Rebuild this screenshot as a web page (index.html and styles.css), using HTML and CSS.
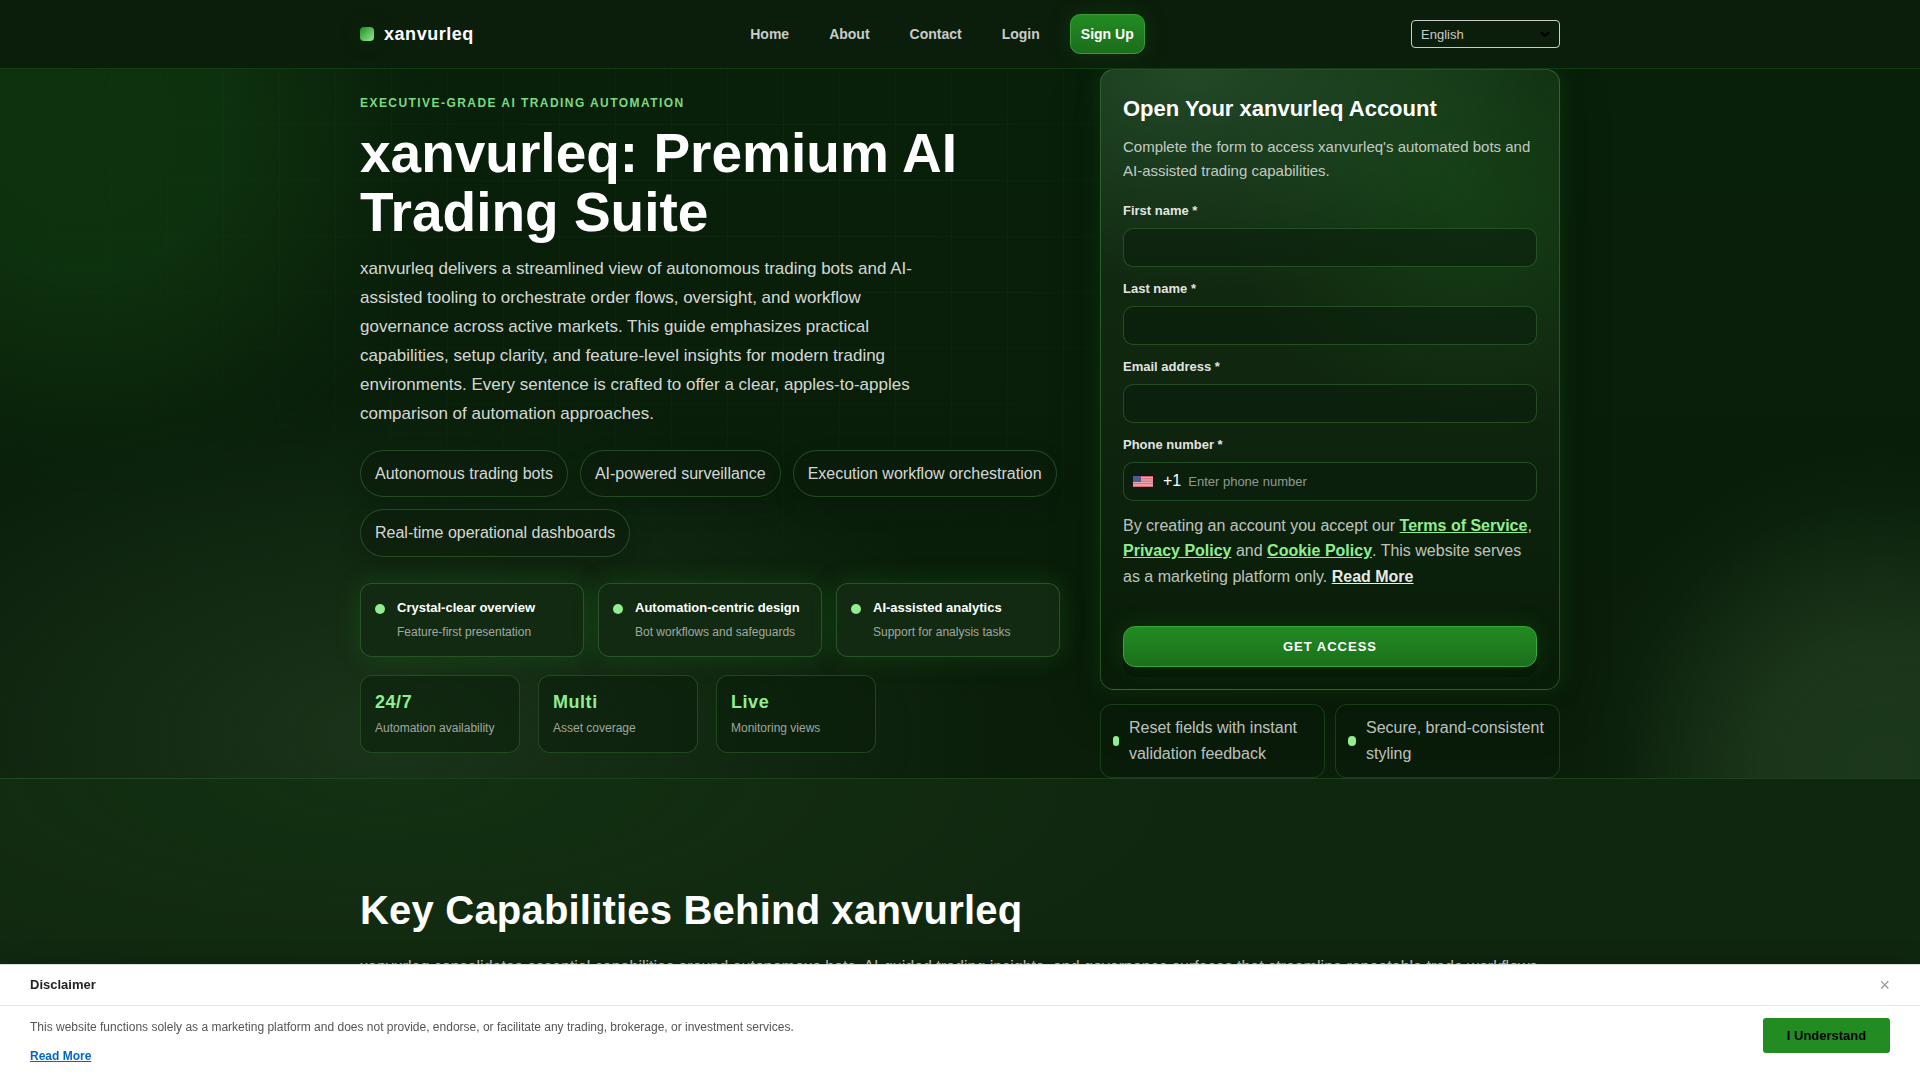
FILE: index.html
```html
<!DOCTYPE html>
<html lang="en">
<head>
    <meta charset="UTF-8">
    <meta name="viewport" content="width=device-width, initial-scale=1.0">
    <title>xanvurleq</title>
    <link rel="stylesheet" href="styles.css">
</head>
<body>
    <header class="site-header">
        <div class="container header-inner">
            <a href="#" class="brand"><span class="brand-mark"></span>xanvurleq</a>
            <nav class="nav">
                <a href="#">Home</a>
                <a href="#">About</a>
                <a href="#">Contact</a>
                <a href="#">Login</a>
                <a href="#signup" class="nav-cta">Sign Up</a>
            </nav>
            <div class="lang">
                <select aria-label="Language">
                    <option>English</option>
                </select>
                <svg class="lang-arrow" viewBox="0 0 10 6" fill="none" stroke="#000" stroke-width="2"><path d="M1 1l4 4 4-4"/></svg>
            </div>
        </div>
    </header>

    <main>
        <section class="hero">
            <div class="container hero-grid">
                <div class="hero-copy">
                    <div class="eyebrow">Executive-Grade AI Trading Automation</div>
                    <h1>xanvurleq: Premium AI Trading Suite</h1>
                    <p class="lead">xanvurleq delivers a streamlined view of autonomous trading bots and AI-assisted tooling to orchestrate order flows, oversight, and workflow governance across active markets. This guide emphasizes practical capabilities, setup clarity, and feature-level insights for modern trading environments. Every sentence is crafted to offer a clear, apples-to-apples comparison of automation approaches.</p>

                    <div class="chips">
                        <span class="chip">Autonomous trading bots</span>
                        <span class="chip">AI-powered surveillance</span>
                        <span class="chip">Execution workflow orchestration</span>
                        <span class="chip">Real-time operational dashboards</span>
                    </div>

                    <div class="features">
                        <div class="feature">
                            <span class="dot"></span>
                            <div>
                                <div class="feature-title">Crystal-clear overview</div>
                                <div class="feature-sub">Feature-first presentation</div>
                            </div>
                        </div>
                        <div class="feature">
                            <span class="dot"></span>
                            <div>
                                <div class="feature-title">Automation-centric design</div>
                                <div class="feature-sub">Bot workflows and safeguards</div>
                            </div>
                        </div>
                        <div class="feature">
                            <span class="dot"></span>
                            <div>
                                <div class="feature-title">AI-assisted analytics</div>
                                <div class="feature-sub">Support for analysis tasks</div>
                            </div>
                        </div>
                    </div>

                    <div class="stats">
                        <div class="stat">
                            <div class="stat-value">24/7</div>
                            <div class="stat-label">Automation availability</div>
                        </div>
                        <div class="stat">
                            <div class="stat-value">Multi</div>
                            <div class="stat-label">Asset coverage</div>
                        </div>
                        <div class="stat">
                            <div class="stat-value">Live</div>
                            <div class="stat-label">Monitoring views</div>
                        </div>
                    </div>
                </div>

                <div class="hero-side" id="signup">
                    <form class="form-card">
                        <h2>Open Your xanvurleq Account</h2>
                        <p class="form-intro">Complete the form to access xanvurleq's automated bots and AI-assisted trading capabilities.</p>

                        <div class="field">
                            <label for="firstName">First name *</label>
                            <input class="control" type="text" id="firstName">
                        </div>
                        <div class="field">
                            <label for="lastName">Last name *</label>
                            <input class="control" type="text" id="lastName">
                        </div>
                        <div class="field">
                            <label for="email">Email address *</label>
                            <input class="control" type="email" id="email">
                        </div>
                        <div class="field">
                            <label for="phone">Phone number *</label>
                            <div class="control phone">
                                <svg class="flag" viewBox="0 0 20 11">
                                    <rect width="20" height="11" fill="#d9596a"/>
                                    <path d="M0 1.5h20M0 3.2h20M0 4.9h20M0 6.6h20M0 8.3h20M0 9.7h20" stroke="#f0c8cc" stroke-width=".8"/>
                                    <rect width="8" height="6" fill="#55588f"/>
                                </svg>
                                <span class="dial">+1</span>
                                <input type="tel" id="phone" placeholder="Enter phone number">
                            </div>
                        </div>

                        <p class="terms">By creating an account you accept our <a href="#">Terms of Service</a>, <a href="#">Privacy Policy</a> and <a href="#">Cookie Policy</a>. This website serves as a marketing platform only. <a href="#" class="more">Read More</a></p>
                        <button type="submit" class="submit">Get Access</button>
                    </form>

                    <div class="notes">
                        <div class="note"><span class="dot"></span><span>Reset fields with instant validation feedback</span></div>
                        <div class="note"><span class="dot"></span><span>Secure, brand-consistent styling</span></div>
                    </div>
                </div>
            </div>
        </section>

        <section class="capabilities">
            <div class="container">
                <h2>Key Capabilities Behind xanvurleq</h2>
                <p>xanvurleq consolidates essential capabilities around autonomous bots, AI-guided trading insights, and governance surfaces that streamline repeatable trade workflows</p>
            </div>
        </section>
    </main>

    <div class="disclaimer">
        <div class="disclaimer-head">
            <strong>Disclaimer</strong>
            <button type="button" class="close" aria-label="Close">×</button>
        </div>
        <div class="disclaimer-body">
            <div>
                <p>This website functions solely as a marketing platform and does not provide, endorse, or facilitate any trading, brokerage, or investment services.</p>
                <a href="#">Read More</a>
            </div>
            <button type="button" class="accept">I Understand</button>
        </div>
    </div>
</body>
</html>
```
FILE: styles.css
```css
:root {
    --green: #228b22;
    --mint: #90ee90;
    --line: rgba(80, 160, 80, 0.35);
    --text: rgba(255, 255, 255, 0.84);
    --muted: rgba(255, 255, 255, 0.74);
    --soft: rgba(255, 255, 255, 0.6);
}

* {
    box-sizing: border-box;
}

body {
    margin: 0;
    height: 100vh;
    overflow: hidden;
    font-family: "Liberation Sans", Arial, sans-serif;
    font-size: 16px;
    line-height: 1.6;
    color: #fff;
    background-color: #0a1f0a;
}

h1, h2, p {
    margin: 0;
}

a {
    color: inherit;
    text-decoration: none;
}

button, input, select {
    font-family: inherit;
}

.container {
    max-width: 1200px;
    margin: 0 auto;
}

/* Header */
.site-header {
    position: relative;
    z-index: 2;
    background: #0b1d0b;
    border-bottom: 1px solid rgba(34, 139, 34, 0.3);
}

.header-inner {
    display: flex;
    align-items: center;
    justify-content: space-between;
    padding: 14px 0;
}

.brand {
    display: flex;
    align-items: center;
    gap: 10px;
    font-size: 18px;
    font-weight: 700;
    letter-spacing: 0.03em;
}

.brand-mark {
    width: 14px;
    height: 14px;
    border-radius: 4px;
    background: linear-gradient(135deg, var(--green), var(--mint));
    box-shadow: 0 0 24px rgba(34, 139, 34, 0.2);
}

.nav {
    display: flex;
    align-items: center;
    gap: 20px;
    font-size: 14px;
    font-weight: 600;
    color: rgba(255, 255, 255, 0.78);
}

.nav a {
    padding: 8px 10px;
}

.nav .nav-cta {
    color: #fff;
    border: 1px solid #3a9d3a;
    border-radius: 10px;
    background: linear-gradient(180deg, #228b22, #1b6e1b);
    box-shadow: 0 0 24px rgba(34, 139, 34, 0.2);
}

.lang {
    position: relative;
}

.lang select {
    appearance: none;
    display: block;
    width: 149px;
    height: 28px;
    padding: 0 9px;
    font-size: 13px;
    color: rgba(255, 255, 255, 0.78);
    background: transparent;
    border: 1px solid rgba(255, 255, 255, 0.78);
    border-radius: 4px;
}

.lang-arrow {
    position: absolute;
    top: 11px;
    right: 10px;
    width: 10px;
    height: 6px;
    pointer-events: none;
}

/* Hero */
.hero {
    position: relative;
    border-bottom: 1px solid rgba(60, 130, 60, 0.35);
    background:
        radial-gradient(circle at 85px 60px, #0e320e, rgba(14, 50, 14, 0.95) 140px, rgba(14, 50, 14, 0.55) 230px, rgba(14, 50, 14, 0.15) 310px, rgba(14, 50, 14, 0) 370px),
        radial-gradient(circle at 98% 98%, #1c381c, rgba(28, 56, 28, 0.9) 120px, rgba(28, 56, 28, 0.5) 195px, rgba(28, 56, 28, 0.12) 260px, rgba(28, 56, 28, 0) 310px),
        radial-gradient(ellipse 620px 340px at 20% 94%, #1a341a, rgba(26, 52, 26, 0)),
        linear-gradient(180deg, #081f0a, #0a1e0a);
}

/* faint grid behind the copy */
.hero::before {
    content: "";
    position: absolute;
    inset: 0;
    background-image:
        repeating-linear-gradient(90deg, transparent 0 55px, rgba(144, 238, 144, 0.04) 55px 56px),
        repeating-linear-gradient(180deg, transparent 0 55px, rgba(144, 238, 144, 0.04) 55px 56px);
    mask-image: radial-gradient(ellipse at 40% 10%, #000, transparent 60%);
}

.hero-grid {
    position: relative;
    display: grid;
    grid-template-columns: 700fr 460fr;
    gap: 40px;
    align-items: center;
}

.eyebrow {
    font-size: 12px;
    font-weight: 700;
    letter-spacing: 0.12em;
    text-transform: uppercase;
    color: #7ed87e;
}

h1 {
    margin: 11px 0 12px;
    max-width: 620px;
    font-size: 55px;
    line-height: 59px;
}

.lead {
    max-width: 560px;
    font-size: 17px;
    line-height: 29px;
    color: var(--text);
}

.chips {
    display: flex;
    flex-wrap: wrap;
    gap: 12px;
    margin-top: 22px;
}

.chip {
    padding: 10px 14px;
    border: 1px solid var(--line);
    border-radius: 999px;
    background: rgba(10, 25, 10, 0.5);
    box-shadow: 0 10px 24px rgba(0, 0, 0, 0.15);
    color: var(--text);
}

.features {
    display: grid;
    grid-template-columns: repeat(3, 1fr);
    gap: 14px;
    margin-top: 26px;
}

.feature {
    display: flex;
    gap: 12px;
    padding: 14px;
    border: 1px solid var(--line);
    border-radius: 12px;
    background: #122a12;
    box-shadow: 0 0 24px rgba(34, 139, 34, 0.25);
}

.dot {
    width: 10px;
    height: 10px;
    border-radius: 50%;
    background: var(--mint);
}

.feature .dot {
    flex: none;
    margin-top: 6px;
}

.feature-title {
    font-size: 13px;
    font-weight: 700;
}

.feature-sub {
    margin-top: 4px;
    font-size: 12px;
    color: var(--soft);
}

.stats {
    display: flex;
    gap: 18px;
    margin-top: 18px;
}

.stat {
    width: 160px;
    padding: 14px;
    border: 1px solid rgba(80, 160, 80, 0.3);
    border-radius: 12px;
    background: rgba(8, 28, 8, 0.5);
}

.stat-value {
    font-size: 18px;
    font-weight: 700;
    line-height: 24px;
    letter-spacing: 0.03em;
    color: var(--mint);
}

.stat-label {
    margin-top: 5px;
    font-size: 12px;
    color: var(--soft);
}

/* Sign-up form */
.form-card {
    padding: 22px;
    border: 1px solid rgba(80, 160, 80, 0.4);
    border-radius: 14px;
    background:
        radial-gradient(ellipse 340px 220px at 20% 0%, rgba(60, 120, 75, 0.38), transparent),
        radial-gradient(circle 240px at 80% 20%, rgba(34, 139, 34, 0.22), transparent),
        linear-gradient(180deg, #122c12, #10260f 50%, #081c08);
    box-shadow: 0 0 24px rgba(34, 139, 34, 0.22), 0 18px 50px rgba(0, 0, 0, 0.3);
}

.form-card h2 {
    font-size: 22px;
    line-height: 34px;
}

.form-intro {
    margin: 9px 0 18px;
    font-size: 15px;
    color: var(--muted);
}

.field {
    margin-bottom: 12px;
}

.field label {
    display: block;
    margin-bottom: 6px;
    font-size: 13px;
    font-weight: 600;
    color: rgba(255, 255, 255, 0.9);
}

.control {
    display: block;
    width: 100%;
    height: 39px;
    padding: 0 12px;
    font-size: 13px;
    color: #fff;
    background: rgba(10, 30, 12, 0.6);
    border: 1px solid var(--line);
    border-radius: 10px;
}

.phone {
    display: flex;
    align-items: center;
    padding: 0 9px;
}

.flag {
    width: 20px;
    height: 11px;
    margin-right: 10px;
}

.dial {
    margin-right: 7px;
    font-size: 16px;
}

.phone input {
    flex: 1;
    padding: 0;
    border: 0;
    outline: 0;
    background: none;
    font-size: 13px;
    color: #fff;
}

.phone input::placeholder {
    color: rgba(255, 255, 255, 0.55);
}

.terms {
    color: var(--muted);
}

.terms a {
    font-weight: 700;
    text-decoration: underline;
    color: var(--mint);
}

.terms .more {
    color: rgba(255, 255, 255, 0.92);
}

.submit {
    display: block;
    width: 100%;
    height: 41px;
    margin-top: 37px;
    border: 1px solid #3aa53a;
    border-radius: 12px;
    background: linear-gradient(180deg, #228b22, #1b701b);
    box-shadow: 0 0 24px rgba(34, 139, 34, 0.2), 0 10px 0 rgba(0, 0, 0, 0.25);
    font-size: 13px;
    font-weight: 700;
    letter-spacing: 1px;
    text-transform: uppercase;
    color: #fff;
}

.notes {
    display: grid;
    grid-template-columns: 1fr 1fr;
    gap: 10px;
    margin-top: 14px;
}

.note {
    display: flex;
    align-items: center;
    gap: 10px;
    padding: 10px 12px;
    border: 1px solid rgba(80, 160, 80, 0.25);
    border-radius: 12px;
    background: rgba(8, 26, 8, 0.6);
    color: var(--muted);
}

.note .dot {
    border-radius: 4px;
}

/* Capabilities */
.capabilities {
    padding: 107px 0 60px;
    background:
        radial-gradient(ellipse 800px 260px at 20% 0%, rgba(34, 100, 40, 0.16), transparent),
        #10270f;
}

.capabilities h2 {
    font-size: 40px;
    line-height: 48px;
    letter-spacing: 0.005em;
}

.capabilities p {
    margin-top: 20px;
    color: var(--muted);
}

/* Disclaimer bar */
.disclaimer {
    position: fixed;
    left: 0;
    right: 0;
    bottom: 0;
    z-index: 10;
    background: #fff;
    border-top: 1px solid #ddd;
    box-shadow: 0 -4px 20px rgba(0, 0, 0, 0.15);
}

.disclaimer-head {
    display: flex;
    align-items: center;
    justify-content: space-between;
    padding: 10px 30px;
    font-size: 13px;
    line-height: 20px;
    color: #222;
    border-bottom: 1px solid #e8e8e8;
}

.close {
    padding: 0;
    border: 0;
    background: none;
    font-size: 18px;
    line-height: 20px;
    color: #999;
}

.disclaimer-body {
    display: flex;
    align-items: flex-start;
    justify-content: space-between;
    padding: 12px 30px 14px;
    font-size: 12px;
    color: #555;
}

.disclaimer-body a {
    display: inline-block;
    margin-top: 10px;
    font-weight: 700;
    text-decoration: underline;
    color: #0066cc;
}

.accept {
    width: 127px;
    height: 35px;
    border: 0;
    border-radius: 3px;
    background: var(--green);
    font-size: 13px;
    font-weight: 700;
    color: #000;
}
```
